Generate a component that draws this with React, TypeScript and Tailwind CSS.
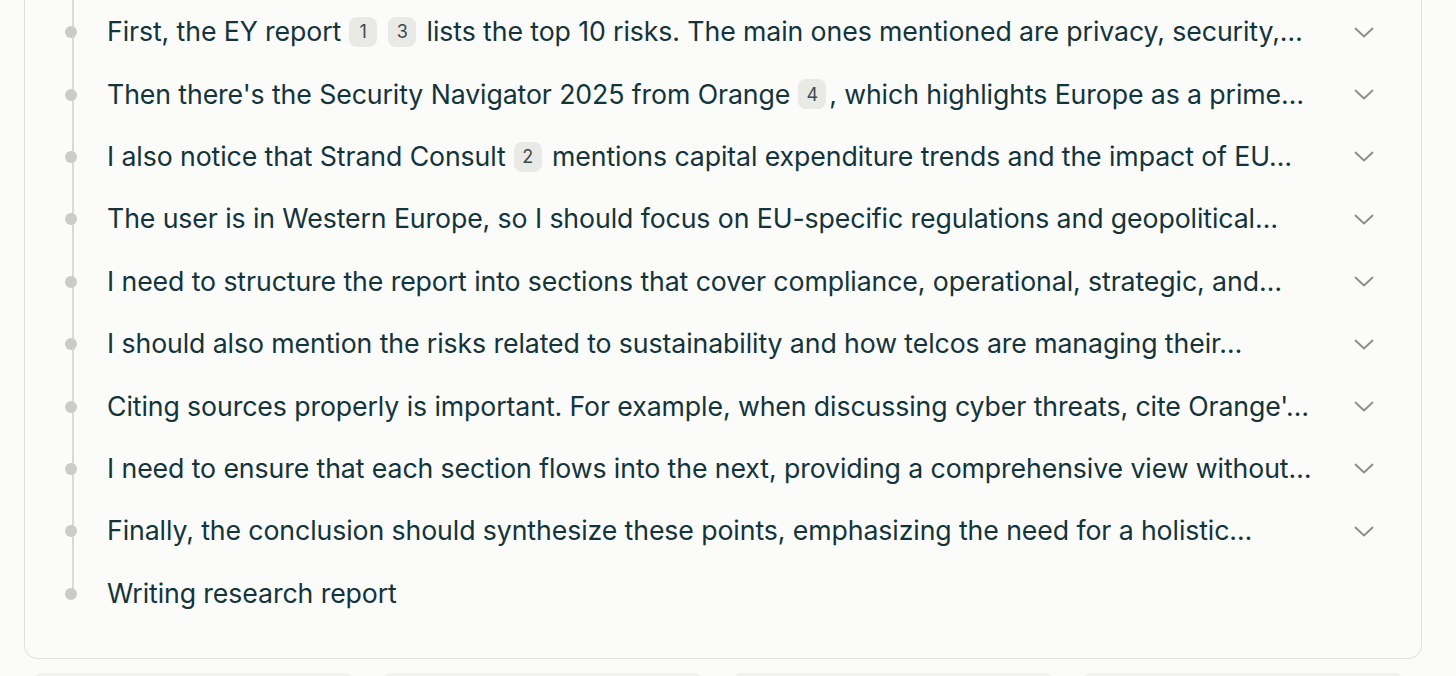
import React from "react"

type Step = {
  parts: (string | number)[]
  expandable: boolean
}

const steps: Step[] = [
  { parts: ["First, the EY report", 1, 3, " lists the top 10 risks. The main ones mentioned are privacy, security,…"], expandable: true },
  { parts: ["Then there's the Security Navigator 2025 from Orange", 4, ", which highlights Europe as a prime…"], expandable: true },
  { parts: ["I also notice that Strand Consult", 2, " mentions capital expenditure trends and the impact of EU…"], expandable: true },
  { parts: ["The user is in Western Europe, so I should focus on EU-specific regulations and geopolitical…"], expandable: true },
  { parts: ["I need to structure the report into sections that cover compliance, operational, strategic, and…"], expandable: true },
  { parts: ["I should also mention the risks related to sustainability and how telcos are managing their…"], expandable: true },
  { parts: ["Citing sources properly is important. For example, when discussing cyber threats, cite Orange'…"], expandable: true },
  { parts: ["I need to ensure that each section flows into the next, providing a comprehensive view without…"], expandable: true },
  { parts: ["Finally, the conclusion should synthesize these points, emphasizing the need for a holistic…"], expandable: true },
  { parts: ["Writing research report"], expandable: false },
]

function Badge({ n }: { n: number }) {
  return (
    <span className="inline-flex items-center justify-center w-[28px] h-[30px] rounded-[8px] bg-[#e9e9e6] text-[18px] text-[#3d4a4c] align-middle ml-[8px] mr-[3px] relative top-[-2px] tracking-normal" style={{ fontFamily: "Inter, sans-serif" }}>
      {n}
    </span>
  )
}

function Chevron() {
  return (
    <svg width="20" height="11" viewBox="0 0 20 11" fill="none" className="shrink-0">
      <path d="M1.5 1.5 L10 9.5 L18.5 1.5" stroke="#8c8c8a" strokeWidth="1.8" strokeLinecap="round" strokeLinejoin="round" />
    </svg>
  )
}

export default function App() {
  return (
    <div className="w-[1456px] h-[676px] overflow-hidden bg-[#fbfbf9]" style={{ fontFamily: "Inter, 'Liberation Sans', sans-serif" }}>
      <div className="ml-[24px] mr-[34px] border-x-[1.5px] border-b-[1.5px] border-[#e0e0dc] rounded-b-[14px] pl-[40px] pr-[47px] pt-[1px] pb-[33px]">
        <div className="relative">
          <div className="absolute left-[6.5px] top-[-2px] bottom-[31px] w-[2px] bg-[#dadad7]" />
          {steps.map((s, i) => (
            <div key={i} className="relative flex items-center h-[62.4px]">
              <div className="w-[12px] h-[12px] rounded-full bg-[#cbcbc8] shrink-0 z-10" />
              <div className="flex-1 min-w-0 ml-[30px] text-[26.7px] tracking-[-0.1px] text-[#13343b] whitespace-nowrap relative top-[-1px]">
                {s.parts.map((p, j) =>
                  typeof p === "number" ? (
                    <Badge key={j} n={p} />
                  ) : (
                    <span key={j}>{p}</span>
                  )
                )}
              </div>
              <div className="w-[50px] flex justify-end shrink-0">
                {s.expandable && <Chevron />}
              </div>
            </div>
          ))}
        </div>
      </div>
      <div className="flex gap-[30px] mt-[14px] ml-[33px]">
        <div className="w-[320px] h-[10px] rounded-t-[8px] bg-[#f1f1ef]" />
        <div className="w-[320px] h-[10px] rounded-t-[8px] bg-[#f1f1ef]" />
        <div className="w-[320px] h-[10px] rounded-t-[8px] bg-[#f1f1ef]" />
        <div className="w-[320px] h-[10px] rounded-t-[8px] bg-[#f1f1ef]" />
      </div>
    </div>
  )
}
